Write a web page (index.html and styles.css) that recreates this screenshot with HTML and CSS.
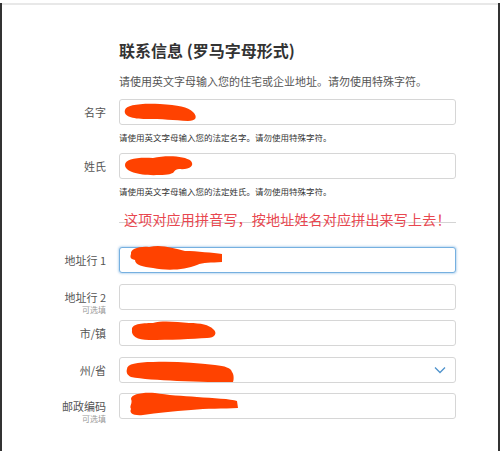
FILE: index.html
```html
<!DOCTYPE html>
<html lang="zh-CN">
<head>
    <meta charset="UTF-8">
    <meta name="viewport" content="width=device-width, initial-scale=1.0">
    <title>联系信息</title>
    <link rel="stylesheet" href="styles.css">
</head>
<body>
    <div class="page">
        <div class="topline"></div>
        <form class="form">
            <h2 class="title">联系信息 (罗马字母形式)</h2>
            <p class="intro">请使用英文字母输入您的住宅或企业地址。请勿使用特殊字符。</p>

            <div class="row">
                <label class="label">名字</label>
                <div class="field">
                    <div class="box">
                        <input class="input" type="text">
                        <svg class="blot" style="left:3px;top:4px" width="76" height="19" viewBox="0 0 76 19"><path d="M3 7 C4 2 18 0 38 1 C56 2 66 4 71 9 C76 14 74 18 66 18 C52 17 40 16 24 16 C10 16 1 13 3 7 Z"/></svg>
                    </div>
                    <p class="help">请使用英文字母输入您的法定名字。请勿使用特殊字符。</p>
                </div>
            </div>

            <div class="row">
                <label class="label">姓氏</label>
                <div class="field">
                    <div class="box">
                        <input class="input" type="text">
                        <svg class="blot" style="left:4px;top:2px" width="71" height="21" viewBox="0 0 71 21"><path d="M2 10 C2 4 14 2 30 3 C44 0 62 1 68 6 C72 11 66 15 56 14 C48 15 56 20 36 20 C18 21 2 17 2 10 Z"/></svg>
                    </div>
                    <p class="help">请使用英文字母输入您的法定姓氏。请勿使用特殊字符。</p>
                </div>
            </div>

            <div class="row note-row">
                <div></div>
                <div class="divider">
                    <span class="note">这项对应用拼音写，按地址姓名对应拼出来写上去！</span>
                </div>
            </div>

            <div class="row addr">
                <label class="label">地址行 1</label>
                <div class="box">
                    <input class="input focused" type="text">
                    <svg class="blot" style="left:8px;top:-2px" width="96" height="26" viewBox="0 0 96 26"><path d="M4 9 C3 4 12 1 22 2 C34 -1 46 3 58 6 C70 6 86 8 95 9 L95 17 C84 18 76 17 70 20 C58 25 40 26 26 23 C16 22 8 20 8 15 C3 14 3 12 4 9 Z"/></svg>
                </div>
            </div>

            <div class="row addr">
                <div class="label stack">
                    <span>地址行 2</span>
                    <small class="opt">可选填</small>
                </div>
                <div class="box">
                    <input class="input" type="text">
                </div>
            </div>

            <div class="row addr">
                <label class="label">市/镇</label>
                <div class="box">
                    <input class="input" type="text">
                    <svg class="blot" style="left:10px;top:0px" width="89" height="21" viewBox="0 0 89 21"><path d="M3 10 C2 4 12 3 24 3 C34 0 48 2 60 3 C72 3 80 5 84 9 C89 13 86 18 78 18 C64 19 40 20 20 20 C8 20 2 16 3 10 Z"/></svg>
                </div>
            </div>

            <div class="row addr">
                <label class="label">州/省</label>
                <div class="box">
                    <div class="input select">
                        <svg class="chevron" width="12" height="8" viewBox="0 0 12 8"><path d="M1 1.5 L6 6.5 L11 1.5"/></svg>
                    </div>
                    <svg class="blot" style="left:6px;top:3px" width="110" height="23" viewBox="0 0 110 23"><path d="M2 9 C2 4 12 2 28 2 C50 1 70 3 90 5 C100 6 106 8 107 12 C109 14 109 20 108 22 C94 22 74 22 52 21 C34 20 16 19 6 17 C2 15 1 12 2 9 Z"/></svg>
                </div>
            </div>

            <div class="row addr">
                <div class="label stack">
                    <span>邮政编码</span>
                    <small class="opt">可选填</small>
                </div>
                <div class="box">
                    <input class="input" type="text">
                    <svg class="blot" style="left:8px;top:-2px" width="112" height="26" viewBox="0 0 112 26"><path d="M4 8 C4 3 16 1 28 2 C40 4 56 5 70 6 C86 7 104 8 110 10 L111 17 C96 18 80 17 64 19 C46 20 30 22 16 24 C6 25 2 22 4 18 C2 15 6 12 4 8 Z"/></svg>
                </div>
            </div>
        </form>
    </div>
</body>
</html>
```

FILE: styles.css
```css
* {
    box-sizing: border-box;
}
body {
    margin: 0;
    background-color: #fff;
    font-family: "Noto Sans CJK SC", "Noto Sans", sans-serif;
    color: #333;
}
.page {
    margin-top: 3px;
    height: 448px;
    border-left: 2px solid #333;
    border-right: 2px solid #333;
}
.topline {
    margin-top: 3px;
    border-top: 2px solid #e8e8e8;
}
.form {
    padding-left: 117px;
}
.title {
    margin: 35px 0 0;
    font-size: 16px;
    line-height: 20px;
    font-weight: bold;
    color: #333;
}
.intro {
    margin: 14px 0 11px;
    font-size: 11px;
    line-height: 14px;
    color: #555;
}
.row {
    display: grid;
    grid-template-columns: 102px 337px;
    column-gap: 13px;
    margin-left: -117px;
    padding-left: 2px;
    margin-bottom: 11px;
}
.label {
    text-align: right;
    font-size: 11px;
    line-height: 26px;
    color: #555;
}
.label.stack {
    display: flex;
    flex-direction: column;
    align-items: flex-end;
    height: 26px;
    line-height: 16px;
    padding-top: 5px;
}
.opt {
    font-size: 8px;
    line-height: 10px;
    color: #999;
}
.box {
    position: relative;
    height: 26px;
}
.input {
    display: block;
    width: 100%;
    height: 26px;
    margin: 0;
    border: 1px solid #d6d6d6;
    border-radius: 3px;
    background-color: #fff;
    outline: none;
}
.input.focused {
    border-color: #76b0e0;
    box-shadow: 0 0 2px 1px rgba(118, 176, 224, 0.45);
}
.select {
    display: flex;
    align-items: center;
    justify-content: flex-end;
    padding-right: 9px;
}
.chevron path {
    fill: none;
    stroke: #4f93cc;
    stroke-width: 1.3;
}
.blot {
    position: absolute;
    overflow: visible;
}
.blot path {
    fill: #ff4200;
}
.help {
    margin: 7px 0 0;
    font-size: 8.5px;
    line-height: 10px;
    color: #333;
}
.note-row {
    margin-top: 26px;
    margin-bottom: 24px;
}
.divider {
    position: relative;
    height: 1px;
    background-color: #d4d4d4;
}
.note {
    position: absolute;
    left: 5px;
    top: -13px;
    font-size: 14px;
    line-height: 20px;
    white-space: nowrap;
    letter-spacing: 0.2px;
    color: #e8474f;
}
.addr {
    margin-bottom: 10.5px;
}
```
